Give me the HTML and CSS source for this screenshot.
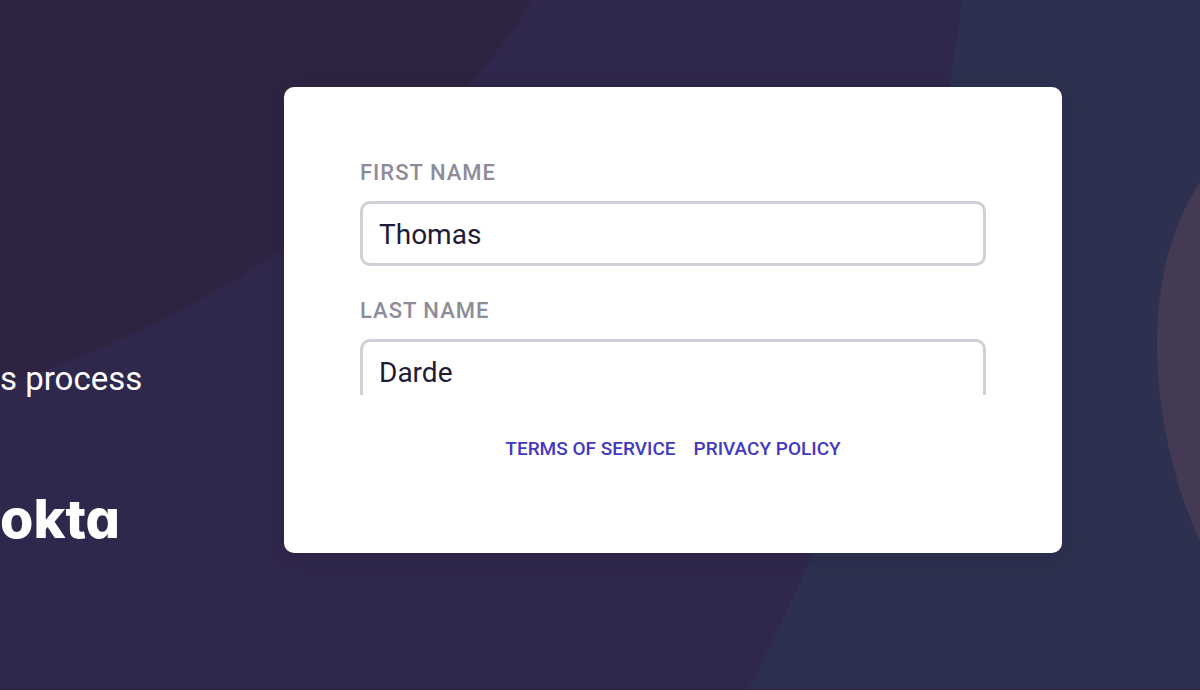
FILE: index.html
```html
<!DOCTYPE html>
<html lang="en">
<head>
    <meta charset="UTF-8">
    <meta name="viewport" content="width=device-width, initial-scale=1.0">
    <title>Account details</title>
    <link rel="stylesheet" href="styles.css">
</head>
<body>
    <svg class="backdrop" viewBox="0 0 1200 690" preserveAspectRatio="xMidYMid slice" aria-hidden="true">
        <path fill="#2e2442" d="M0 0H532Q508 41 467 87Q386 180 284 249Q180 318 60 365L0 386Z"/>
        <path fill="#2d304e" d="M962 0Q918 362 748 690H1200V0Z"/>
        <path fill="#443a53" d="M1200 182C1172 224 1157 280 1157 343C1157 410 1172 480 1200 541Z"/>
    </svg>

    <main class="page">
        <section class="intro">
            <p class="intro-text">s process</p>
            <div class="logo">okta</div>
        </section>

        <section class="card">
            <form class="fields">
                <div class="field">
                    <label for="first-name">First name</label>
                    <input type="text" id="first-name" value="Thomas">
                </div>
                <div class="field">
                    <label for="last-name">Last name</label>
                    <input type="text" id="last-name" value="Darde">
                </div>
            </form>
            <nav class="links">
                <a href="#terms">Terms of Service</a>
                <a href="#privacy">Privacy Policy</a>
            </nav>
        </section>
    </main>
</body>
</html>
```

FILE: styles.css
```css
* {
    box-sizing: border-box;
}

body {
    margin: 0;
    min-height: 100vh;
    background: #30274c;
    font-family: Roboto, sans-serif;
    overflow-x: hidden;
}

/* Background shapes */
.backdrop {
    position: absolute;
    inset: 0;
    width: 100%;
    height: 100%;
    z-index: -1;
}

.page {
    display: flex;
    align-items: flex-start;
    gap: 142px;
    min-height: 100vh;
    padding: 87px 138px 0 0;
    border-bottom: 1px solid #28213d;
}

/* Left column */
.intro {
    display: flex;
    flex-direction: column;
    gap: 88px;
    width: 142px;
    flex-shrink: 0;
    padding-top: 272px;
    color: #fff;
}

.intro-text {
    margin: 0;
    font-size: 33px;
    line-height: 40px;
    white-space: nowrap;
}

.logo {
    font-family: Inter, sans-serif;
    font-size: 54px;
    font-weight: 800;
    line-height: 64px;
    font-feature-settings: "cv11"; /* single-storey a */
}

/* Card */
.card {
    flex: 1;
    padding: 71px 76px 92px;
    background: #fff;
    border-radius: 10px;
    box-shadow: 0 4px 20px rgba(20, 16, 50, 0.15);
}

/* Scroll area of the form, cuts the last visible field */
.fields {
    display: flex;
    flex-direction: column;
    gap: 30px;
    height: 237px;
    overflow: hidden;
}

.field {
    display: flex;
    flex-direction: column;
    flex-shrink: 0;
    gap: 13px;
}

label {
    color: #8e8c99;
    font-size: 22px;
    font-weight: 500;
    line-height: 30px;
    letter-spacing: 1px;
    text-transform: uppercase;
}

input {
    width: 100%;
    height: 65px;
    padding: 2px 16px 0;
    border: 3px solid #d0cfd8;
    border-radius: 10px;
    background: #fff;
    color: #211b38;
    font-family: inherit;
    font-size: 28px;
}

.links {
    display: flex;
    justify-content: center;
    gap: 18px;
    margin-top: 42px;
}

.links a {
    color: #4338c0;
    font-size: 19px;
    font-weight: 500;
    line-height: 24px;
    text-decoration: none;
    text-transform: uppercase;
}
```
